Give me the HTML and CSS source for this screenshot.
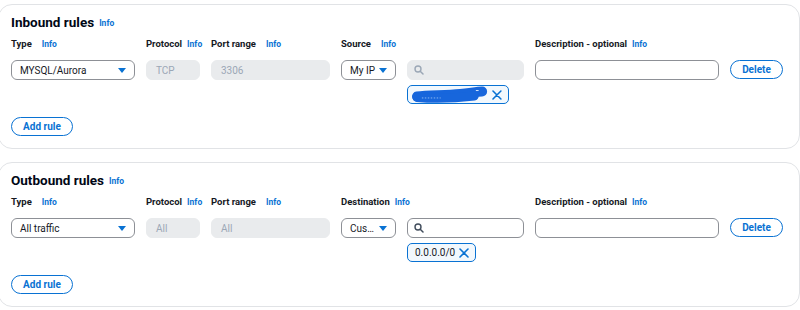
FILE: index.html
```html
<!DOCTYPE html>
<html lang="en">
<head>
<meta charset="utf-8">
<title>Security group rules</title>
<link rel="stylesheet" href="styles.css">
</head>
<body>
<div class="page">
  <section class="card">
    <h2 class="title">Inbound rules <span class="info info-title">Info</span></h2>
    <div class="grid labels">
      <div class="label">Type <span class="info">Info</span></div>
      <div class="label">Protocol <span class="info tight">Info</span></div>
      <div class="label">Port range <span class="info">Info</span></div>
      <div class="label span2">Source <span class="info">Info</span></div>
      <div class="label">Description - optional <span class="info tight">Info</span></div>
      <div></div>
    </div>
    <div class="grid row">
      <div class="field select"><span>MYSQL/Aurora</span><span class="caret"></span></div>
      <div class="field disabled">TCP</div>
      <div class="field disabled">3306</div>
      <div class="field select"><span>My IP</span><span class="caret"></span></div>
      <div class="srccol">
        <div class="field search disabled">
          <svg class="mag" width="10" height="10" viewBox="0 0 10 10"><circle cx="4" cy="4" r="3" fill="none" stroke="currentColor" stroke-width="1.4"/><line x1="6.2" y1="6.2" x2="9" y2="9" stroke="currentColor" stroke-width="1.5" stroke-linecap="round"/></svg>
        </div>
        <div class="token token-wide">
          <svg class="scribble" width="78" height="17" viewBox="0 0 78 17">
            <path d="M6 10.5 C 18 9, 34 9.5, 50 8 C 60 7, 67 5.5, 72 5.5" fill="none" stroke="#1766dc" stroke-width="10" stroke-linecap="round"/>
            <path d="M6 11.5 C 22 13, 44 12.5, 64 10" fill="none" stroke="#1766dc" stroke-width="9" stroke-linecap="round"/>
            <path d="M11 12 L 30 12" stroke="#a9cbf3" stroke-width="0.8" stroke-dasharray="1.5 1.5"/>
            <path d="M66 4.5 L 68 4.5" stroke="#d5e6fb" stroke-width="1" stroke-linecap="round"/>
          </svg>
          <svg class="x" width="10" height="10" viewBox="0 0 10 10"><path d="M1 1 L9 9 M9 1 L1 9" stroke="currentColor" stroke-width="1.6" stroke-linecap="round"/></svg>
        </div>
      </div>
      <div class="field"></div>
      <button class="btn">Delete</button>
    </div>
    <button class="btn add">Add rule</button>
  </section>

  <section class="card">
    <h2 class="title">Outbound rules <span class="info info-title">Info</span></h2>
    <div class="grid labels">
      <div class="label">Type <span class="info">Info</span></div>
      <div class="label">Protocol <span class="info tight">Info</span></div>
      <div class="label">Port range <span class="info">Info</span></div>
      <div class="label span2">Destination <span class="info tight">Info</span></div>
      <div class="label">Description - optional <span class="info tight">Info</span></div>
      <div></div>
    </div>
    <div class="grid row">
      <div class="field select"><span>All traffic</span><span class="caret"></span></div>
      <div class="field disabled">All</div>
      <div class="field disabled">All</div>
      <div class="field select"><span>Cus…</span><span class="caret"></span></div>
      <div class="srccol">
        <div class="field search">
          <svg class="mag" width="10" height="10" viewBox="0 0 10 10"><circle cx="4" cy="4" r="3" fill="none" stroke="currentColor" stroke-width="1.4"/><line x1="6.2" y1="6.2" x2="9" y2="9" stroke="currentColor" stroke-width="1.5" stroke-linecap="round"/></svg>
        </div>
        <div class="token">
          <span>0.0.0.0/0</span>
          <svg class="x" width="10" height="10" viewBox="0 0 10 10"><path d="M1 1 L9 9 M9 1 L1 9" stroke="currentColor" stroke-width="1.6" stroke-linecap="round"/></svg>
        </div>
      </div>
      <div class="field"></div>
      <button class="btn">Delete</button>
    </div>
    <button class="btn add">Add rule</button>
  </section>
</div>
</body>
</html>
```
FILE: styles.css
```css
* { box-sizing: border-box; }
html, body { margin: 0; padding: 0; background: #ffffff; }
body {
  font-family: Roboto, "Open Sans", Arial, sans-serif;
  color: #16191f;
  overflow: hidden;
}
.page {
  padding-top: 4px;
  display: flex;
  flex-direction: column;
  gap: 13px;
}
.card {
  margin-left: -2px;
  width: 802px;
  height: 145px;
  border: 1px solid #e1e3e6;
  border-radius: 14px;
  padding: 7px 0 0 12px;
}
.title {
  margin: 0;
  height: 20px;
  line-height: 20px;
  font-size: 13.5px;
  font-weight: 700;
  color: #000716;
  display: flex;
  align-items: center;
}
.info {
  color: #0972d3;
  font-size: 8.5px;
  font-weight: 700;
  margin-left: 10px;
}
.info.tight { margin-left: 5px; }
.info-title { margin-left: 5px; margin-top: 2px; }
.grid {
  display: grid;
  grid-template-columns: 124px 54px 119px 55px 117px 184px 53px;
  column-gap: 11px;
}
.labels { margin-top: 5px; height: 14px; align-items: center; }
.label {
  font-size: 9.5px;
  font-weight: 700;
  line-height: 14px;
  white-space: nowrap;
  display: flex;
  align-items: center;
}
.span2 { grid-column: span 2; }
.row { margin-top: 9px; align-items: start; }
.field {
  height: 20px;
  border: 1px solid #8d9096;
  border-radius: 6px;
  font-size: 10px;
  padding: 0 8px;
  display: flex;
  align-items: center;
  background: #fff;
  color: #16191f;
}
.field.disabled {
  border-color: #e9ebed;
  background: #e9ebed;
  color: #9ba7b6;
  padding-left: 9px;
}
.select { justify-content: space-between; }
.caret {
  width: 0; height: 0;
  border-left: 4px solid transparent;
  border-right: 4px solid transparent;
  border-top: 5px solid #0972d3;
}
.search { align-self: stretch; padding-left: 6px; color: #414d5c; }
.search.disabled { color: #9ba7b6; padding-left: 6px; }
.mag { display: block; }
.srccol { display: flex; flex-direction: column; align-items: flex-start; gap: 5px; }
.token {
  height: 19px;
  border: 1px solid #0972d3;
  border-radius: 5px;
  background: #f2f8fd;
  display: flex;
  align-items: center;
  padding: 0 6px 0 7px;
  gap: 4px;
  font-size: 10px;
  color: #16191f;
}
.token-wide { width: 102px; padding-left: 3px; justify-content: space-between; }
.scribble { display: block; }
.x { color: #0972d3; display: block; }
.btn {
  height: 19px;
  border: 1.5px solid #0972d3;
  border-radius: 10px;
  background: #fff;
  color: #0972d3;
  font-family: inherit;
  font-size: 10px;
  font-weight: 700;
  padding: 0;
  cursor: pointer;
}
.add { margin-top: 13px; width: 62px; display: block; }
```
